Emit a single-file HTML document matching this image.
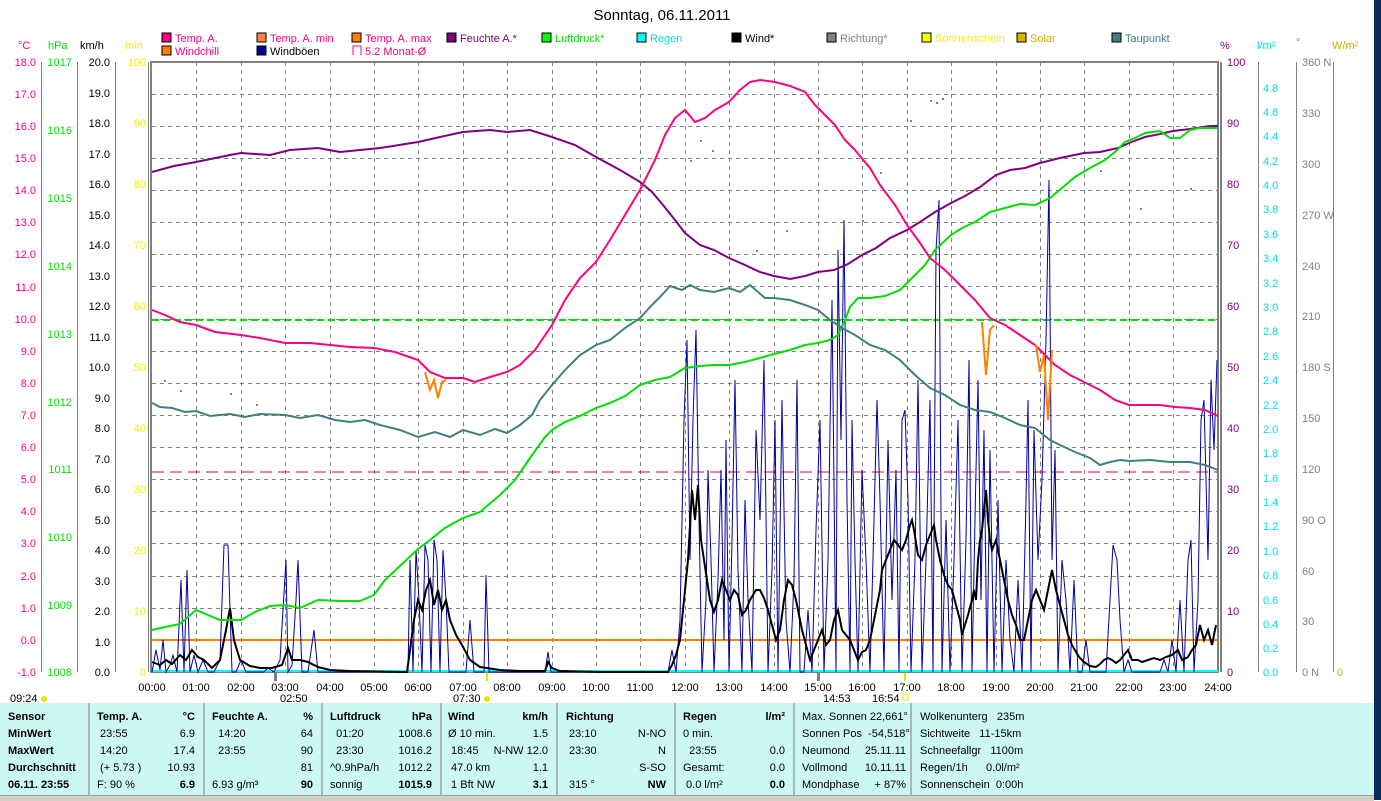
<!DOCTYPE html>
<html><head><meta charset="utf-8">
<style>
html,body{margin:0;padding:0;background:#fff;}
body{width:1381px;height:800px;overflow:hidden;position:relative;font-family:"Liberation Sans",sans-serif;}
svg{position:absolute;left:0;top:0;}
text{font-family:"Liberation Sans",sans-serif;font-size:11px;}
.tbl{position:absolute;left:0;top:703px;width:1374px;height:92px;background:#ccf8f4;}
.col{position:absolute;top:0;height:92px;border-right:2px solid #a8b8b8;font-size:11px;line-height:17px;padding-top:6px;box-sizing:border-box;}
.r{display:flex;justify-content:space-between;white-space:nowrap;}
.b{font-weight:bold;}
</style></head><body>
<svg width="1381" height="800" viewBox="0 0 1381 800">
<rect x="1374" y="0" width="7" height="800" fill="#0a2a5a"/>
<text x="662" y="20" font-size="15" text-anchor="middle" style="font-size:15px">Sonntag, 06.11.2011</text>
<g style="font-size:11px">
<rect x="162" y="33" width="9" height="9" fill="#ff0080" stroke="#000"/><text x="175" y="42" fill="#ff0080">Temp. A.</text>
<rect x="257" y="33" width="9" height="9" fill="#ff8040" stroke="#000"/><text x="270" y="42" fill="#ff0080">Temp. A. min</text>
<rect x="352" y="33" width="9" height="9" fill="#ff8000" stroke="#000"/><text x="365" y="42" fill="#ff0080">Temp. A. max</text>
<rect x="447" y="33" width="9" height="9" fill="#800080" stroke="#000"/><text x="460" y="42" fill="#800080">Feuchte A.*</text>
<rect x="542" y="33" width="9" height="9" fill="#00ff00" stroke="#000"/><text x="555" y="42" fill="#00e000">Luftdruck*</text>
<rect x="637" y="33" width="9" height="9" fill="#00ffff" stroke="#000"/><text x="650" y="42" fill="#00e0e0">Regen</text>
<rect x="732" y="33" width="9" height="9" fill="#000" stroke="#000"/><text x="745" y="42" fill="#000">Wind*</text>
<rect x="827" y="33" width="9" height="9" fill="#808080" stroke="#000"/><text x="840" y="42" fill="#808080">Richtung*</text>
<rect x="922" y="33" width="9" height="9" fill="#ffff00" stroke="#000"/><text x="935" y="42" fill="#f0f000">Sonnenschein</text>
<rect x="1017" y="33" width="9" height="9" fill="#e0b000" stroke="#000"/><text x="1030" y="42" fill="#d8a800">Solar</text>
<rect x="1112" y="33" width="9" height="9" fill="#408080" stroke="#000"/><text x="1125" y="42" fill="#408080">Taupunkt</text>
<rect x="162" y="46" width="9" height="9" fill="#ff8000" stroke="#000"/><text x="175" y="55" fill="#ff0080">Windchill</text>
<rect x="257" y="46" width="9" height="9" fill="#000090" stroke="#000"/><text x="270" y="55" fill="#000">Windböen</text>
<path d="M353 55V46h8v9" fill="none" stroke="#ff0080"/><text x="365" y="55" fill="#ff0080">5.2 Monat-Ø</text>
</g>
<text x="18" y="49" fill="#ff0080">°C</text><text x="48" y="49" fill="#00e000">hPa</text><text x="80" y="49" fill="#000">km/h</text><text x="125" y="49" fill="#f0f000">min</text>
<text x="1220" y="49" fill="#800080">%</text><text x="1257" y="49" fill="#00e0e0">l/m²</text><text x="1296" y="46" fill="#808080">°</text><text x="1332" y="49" fill="#d8a800">W/m²</text>
<g stroke="#808080" stroke-dasharray="4,4" stroke-width="1">
<path d="M196.5 62V672M241.5 62V672M285.5 62V672M330.5 62V672M374.5 62V672M418.5 62V672M463.5 62V672M507.5 62V672M552.5 62V672M596.5 62V672M640.5 62V672M685.5 62V672M729.5 62V672M774.5 62V672M818.5 62V672M862.5 62V672M907.5 62V672M951.5 62V672M996.5 62V672M1040.5 62V672M1084.5 62V672M1129.5 62V672M1173.5 62V672"/>
<path d="M152 94.5H1218M152 126.5H1218M152 158.5H1218M152 190.5H1218M152 222.5H1218M152 254.5H1218M152 286.5H1218M152 319.5H1218M152 351.5H1218M152 383.5H1218M152 415.5H1218M152 447.5H1218M152 479.5H1218M152 511.5H1218M152 543.5H1218M152 576.5H1218M152 608.5H1218M152 640.5H1218"/>
</g>
<rect x="151" y="62" width="1067" height="610" fill="none" stroke="#808080" stroke-width="2"/>
<line x1="1221" y1="62" x2="1221" y2="672" stroke="#808080" stroke-width="2"/>
<g stroke="#808080"><path d="M41.5 62V672M77.5 62V672M115.5 62V672M148.5 62V672M1258.5 62V672M1296.5 62V672M1333.5 62V672"/></g>
<g fill="#ff0080" text-anchor="end" style="font-size:11px">
<text x="36" y="66">18.0</text><text x="36" y="98">17.0</text><text x="36" y="130">16.0</text><text x="36" y="162">15.0</text><text x="36" y="194">14.0</text><text x="36" y="226">13.0</text><text x="36" y="258">12.0</text><text x="36" y="291">11.0</text><text x="36" y="323">10.0</text><text x="36" y="355">9.0</text><text x="36" y="387">8.0</text><text x="36" y="419">7.0</text><text x="36" y="451">6.0</text><text x="36" y="483">5.0</text><text x="36" y="515">4.0</text><text x="36" y="547">3.0</text><text x="36" y="580">2.0</text><text x="36" y="612">1.0</text><text x="36" y="644">0.0</text><text x="36" y="676">-1.0</text>
</g>
<g fill="#00e000" text-anchor="end"><text x="72" y="66">1017</text><text x="72" y="134">1016</text><text x="72" y="202">1015</text><text x="72" y="270">1014</text><text x="72" y="338">1013</text><text x="72" y="406">1012</text><text x="72" y="473">1011</text><text x="72" y="541">1010</text><text x="72" y="609">1009</text><text x="72" y="676">1008</text></g>
<g fill="#000" text-anchor="end"><text x="110" y="66">20.0</text><text x="110" y="97">19.0</text><text x="110" y="127">18.0</text><text x="110" y="158">17.0</text><text x="110" y="188">16.0</text><text x="110" y="219">15.0</text><text x="110" y="249">14.0</text><text x="110" y="280">13.0</text><text x="110" y="310">12.0</text><text x="110" y="341">11.0</text><text x="110" y="371">10.0</text><text x="110" y="402">9.0</text><text x="110" y="432">8.0</text><text x="110" y="463">7.0</text><text x="110" y="493">6.0</text><text x="110" y="524">5.0</text><text x="110" y="554">4.0</text><text x="110" y="585">3.0</text><text x="110" y="615">2.0</text><text x="110" y="646">1.0</text><text x="110" y="676">0.0</text></g>
<g fill="#f0f000" text-anchor="end"><text x="146" y="66">100</text><text x="146" y="127">90</text><text x="146" y="188">80</text><text x="146" y="249">70</text><text x="146" y="310">60</text><text x="146" y="371">50</text><text x="146" y="432">40</text><text x="146" y="493">30</text><text x="146" y="554">20</text><text x="146" y="615">10</text><text x="146" y="676">0</text></g>
<g fill="#800080"><text x="1227" y="66">100</text><text x="1227" y="127">90</text><text x="1227" y="188">80</text><text x="1227" y="249">70</text><text x="1227" y="310">60</text><text x="1227" y="371">50</text><text x="1227" y="432">40</text><text x="1227" y="493">30</text><text x="1227" y="554">20</text><text x="1227" y="615">10</text><text x="1227" y="676">0</text></g>
<g fill="#00e0e0" style="font-size:10px"><text x="1263" y="92">4.8</text><text x="1263" y="116">4.6</text><text x="1263" y="140">4.4</text><text x="1263" y="165">4.2</text><text x="1263" y="189">4.0</text><text x="1263" y="213">3.8</text><text x="1263" y="238">3.6</text><text x="1263" y="262">3.4</text><text x="1263" y="287">3.2</text><text x="1263" y="311">3.0</text><text x="1263" y="335">2.8</text><text x="1263" y="360">2.6</text><text x="1263" y="384">2.4</text><text x="1263" y="409">2.2</text><text x="1263" y="433">2.0</text><text x="1263" y="457">1.8</text><text x="1263" y="482">1.6</text><text x="1263" y="506">1.4</text><text x="1263" y="530">1.2</text><text x="1263" y="555">1.0</text><text x="1263" y="579">0.8</text><text x="1263" y="604">0.6</text><text x="1263" y="628">0.4</text><text x="1263" y="652">0.2</text><text x="1263" y="676">0.0</text></g>
<g fill="#808080"><text x="1302" y="66">360 N</text><text x="1302" y="117">330</text><text x="1302" y="168">300</text><text x="1302" y="219">270 W</text><text x="1302" y="270">240</text><text x="1302" y="320">210</text><text x="1302" y="371">180 S</text><text x="1302" y="422">150</text><text x="1302" y="473">120</text><text x="1302" y="524">90 O</text><text x="1302" y="575">60</text><text x="1302" y="625">30</text><text x="1302" y="676">0 N</text></g>
<text x="1337" y="676" fill="#d8a800">0</text>
<line x1="152" y1="320" x2="1218" y2="320" stroke="#00e000" stroke-width="2" stroke-dasharray="7,4"/>
<line x1="152" y1="472" x2="1218" y2="472" stroke="#e0006a" stroke-dasharray="12,6"/>
<line x1="152" y1="640" x2="1218" y2="640" stroke="#ff8000" stroke-width="2"/>
<line x1="152" y1="671" x2="1218" y2="671" stroke="#00ffff" stroke-width="2"/>
<polyline fill="none" stroke="#0000a0" stroke-width="1" points="152,672 156,650 160,670 163,640 166,672 170,665 173,655 177,672 181,580 184,672 187,570 190,672 194,655 198,672 203,660 208,672 214,672 220,660 224,545 228,545 232,672 236,672 241,660 246,672 252,672 258,672 264,672 268,668 274,672 280,660 286,560 288,672 292,665 296,600 298,560 302,672 308,672 314,630 318,672 324,672 330,672 340,672 400,672 408,672 410,560 413,672 416,550 419,600 422,672 425,545 428,560 431,672 434,540 437,560 440,672 443,550 446,600 449,672 455,672 460,672 466,672 470,620 474,672 480,672 484,672 486,575 489,672 500,672 545,672 548,652 551,672 560,672 600,672 668,672 672,650 676,672 680,620 684,420 687,340 690,560 693,420 696,330 699,520 702,672 706,600 708,470 711,560 714,672 718,580 721,470 724,640 726,440 729,672 732,540 735,380 738,570 742,672 745,500 748,600 752,672 756,430 760,520 764,360 768,672 772,570 775,420 778,672 782,400 786,620 790,672 794,580 797,380 800,672 804,672 808,610 812,672 816,530 820,420 824,672 828,560 832,300 836,672 838,250 841,440 844,220 847,500 850,672 852,420 855,560 858,672 862,470 866,560 870,672 874,520 877,400 880,500 884,672 888,440 892,600 896,470 899,672 902,420 905,410 908,500 911,672 915,560 918,380 922,672 926,560 930,400 933,672 936,250 939,200 942,672 946,520 950,672 954,560 958,420 962,672 966,540 969,360 972,672 976,470 978,380 981,600 984,430 987,672 990,450 994,672 998,500 1002,672 1006,560 1010,640 1014,672 1018,580 1022,672 1026,500 1028,400 1031,672 1034,430 1038,560 1042,480 1046,340 1049,180 1052,560 1055,450 1058,672 1062,560 1066,600 1070,672 1074,580 1078,672 1082,672 1086,640 1090,672 1096,672 1106,672 1110,600 1113,545 1117,560 1120,620 1124,672 1128,660 1132,672 1140,672 1150,672 1160,672 1164,660 1168,672 1172,640 1176,672 1180,600 1184,672 1188,560 1191,540 1194,672 1198,600 1201,420 1204,400 1208,560 1211,380 1214,450 1217,360"/>
<polyline fill="none" stroke="#000" stroke-width="2" points="152,662 160,665 166,660 172,664 180,655 186,660 192,650 198,657 204,660 212,668 220,660 226,630 230,608 234,640 240,660 250,666 260,668 272,668 282,665 288,648 292,660 300,660 308,662 318,667 330,670 350,671 400,672 407,672 410,650 414,620 418,600 422,610 426,590 430,580 434,605 438,590 442,610 446,600 450,620 456,635 462,645 470,660 480,667 500,670 520,671 545,671 548,662 552,668 560,671 600,672 668,672 672,665 676,655 680,640 684,600 688,560 692,490 695,520 698,485 701,540 704,560 707,580 710,600 714,612 718,600 722,580 726,590 730,600 734,590 738,595 742,615 746,610 750,600 756,590 760,590 764,598 768,610 772,625 776,640 780,630 784,600 788,580 792,585 796,600 802,630 806,645 810,660 814,650 818,640 822,630 826,645 830,640 834,620 838,610 842,630 846,635 850,640 854,650 858,660 862,652 866,650 870,640 876,610 880,590 882,570 886,560 890,550 894,540 898,545 902,550 906,540 910,525 912,520 914,530 918,555 922,560 926,545 930,535 934,525 936,540 940,560 944,575 948,585 952,590 956,605 960,620 962,635 964,628 968,615 972,600 974,590 976,600 978,560 980,540 982,530 984,510 986,490 988,520 990,540 992,550 996,540 1000,560 1004,580 1008,600 1012,615 1016,625 1020,640 1024,640 1028,620 1032,600 1036,590 1040,600 1044,610 1048,590 1052,570 1056,590 1060,605 1064,620 1068,635 1072,645 1076,652 1080,658 1084,662 1090,666 1096,667 1100,664 1104,660 1108,658 1112,660 1116,663 1120,660 1124,655 1128,650 1132,660 1138,660 1142,662 1148,660 1154,658 1160,660 1166,657 1172,655 1178,650 1182,660 1188,657 1192,650 1196,645 1200,625 1204,640 1208,630 1212,645 1216,625"/>
<polyline fill="none" stroke="#800080" stroke-width="2" points="152,172 174,166 196,162 230,155 241,153 270,155 290,150 318,148 340,152 360,150 380,148 418,142 440,137 463,132 490,130 507,132 530,130 552,137 575,145 596,157 620,170 640,182 652,192 663,205 675,220 685,233 700,245 714,250 729,258 745,265 760,272 774,276 790,279 805,276 818,272 834,270 848,264 862,255 876,248 890,238 907,230 920,222 935,212 951,203 965,196 980,187 996,175 1010,170 1025,168 1040,163 1060,158 1084,153 1100,152 1118,148 1129,143 1145,137 1160,134 1173,131 1190,129 1210,126 1218,126"/>
<polyline fill="none" stroke="#00e000" stroke-width="2" points="152,630 165,627 180,624 196,610 208,615 220,620 241,620 255,612 270,606 285,605 300,608 318,600 340,601 360,601 374,595 385,580 400,566 418,549 430,540 445,528 463,518 480,512 500,495 515,480 530,458 545,437 552,430 565,422 580,416 596,408 610,403 625,396 640,385 655,380 670,377 685,368 700,366 714,365 729,365 745,362 760,358 774,354 790,350 805,345 818,343 830,340 838,335 845,320 850,307 858,298 870,298 885,296 900,290 910,280 925,265 935,250 951,235 962,228 975,222 990,212 1005,208 1020,204 1035,205 1050,198 1062,188 1075,177 1090,168 1105,160 1115,152 1125,142 1135,138 1145,133 1160,131 1170,138 1180,138 1190,130 1200,128 1210,128 1218,128"/>
<polyline fill="none" stroke="#408080" stroke-width="2" points="152,403 160,407 172,408 185,412 196,411 210,416 230,414 245,417 260,414 285,415 300,418 318,415 335,420 350,422 365,420 380,425 400,430 418,437 435,432 450,437 463,430 480,435 495,429 507,433 520,425 532,415 540,400 552,385 565,370 580,355 596,345 610,340 625,328 640,318 652,305 662,295 670,286 682,290 690,285 700,290 714,292 729,288 740,292 750,285 765,298 774,298 790,300 805,305 818,310 830,320 842,328 855,335 870,345 885,350 900,360 915,375 930,388 945,395 960,405 975,410 990,412 1005,418 1020,425 1035,428 1050,440 1060,445 1075,452 1090,458 1100,465 1110,462 1120,460 1130,461 1150,460 1170,462 1190,462 1205,465 1218,470"/>
<polyline fill="none" stroke="#ff0080" stroke-width="2" points="152,310 165,315 180,322 196,325 215,332 241,335 260,338 285,343 310,343 330,345 350,347 374,348 395,352 418,360 430,372 445,378 463,378 475,382 490,377 507,372 520,365 535,350 552,325 565,300 580,278 596,262 610,240 625,215 640,190 655,160 665,135 675,118 685,110 695,122 705,118 715,110 729,102 740,90 750,82 760,80 775,82 790,86 805,92 815,105 825,115 835,125 845,140 855,150 870,168 880,185 895,205 907,225 920,243 930,258 945,270 960,285 975,300 990,318 1005,325 1020,335 1035,345 1045,355 1055,365 1070,375 1084,382 1100,390 1115,400 1129,405 1145,405 1160,405 1175,407 1190,408 1205,410 1218,416"/>
<polyline fill="none" stroke="#ff8000" stroke-width="2" points="425,372 430,390 434,380 438,398 442,382 446,380"/>
<polyline fill="none" stroke="#ff8000" stroke-width="2" points="982,322 986,375 990,330 994,325"/>
<polyline fill="none" stroke="#ff8000" stroke-width="2" points="1036,345 1040,372 1044,355 1048,420 1052,350"/>
<g fill="#808080">
<rect x="700" y="140" width="2" height="2"/><rect x="712" y="150" width="2" height="2"/><rect x="690" y="160" width="2" height="2"/><rect x="756" y="250" width="2" height="2"/><rect x="786" y="230" width="2" height="2"/><rect x="930" y="100" width="2" height="2"/><rect x="936" y="102" width="2" height="2"/><rect x="942" y="98" width="2" height="2"/><rect x="910" y="120" width="2" height="2"/><rect x="880" y="172" width="2" height="2"/><rect x="966" y="190" width="2" height="2"/><rect x="1140" y="208" width="2" height="2"/><rect x="1190" y="188" width="2" height="2"/><rect x="180" y="390" width="2" height="2"/><rect x="230" y="393" width="2" height="2"/><rect x="256" y="404" width="2" height="2"/><rect x="164" y="380" width="2" height="2"/><rect x="862" y="220" width="2" height="2"/><rect x="1040" y="160" width="2" height="2"/><rect x="1100" y="170" width="2" height="2"/>
</g>
<g fill="#000" text-anchor="middle" style="font-size:11px">
<text x="152" y="691">00:00</text><text x="196" y="691">01:00</text><text x="241" y="691">02:00</text><text x="285" y="691">03:00</text><text x="330" y="691">04:00</text><text x="374" y="691">05:00</text><text x="418" y="691">06:00</text><text x="463" y="691">07:00</text><text x="507" y="691">08:00</text><text x="552" y="691">09:00</text><text x="596" y="691">10:00</text><text x="640" y="691">11:00</text><text x="685" y="691">12:00</text><text x="729" y="691">13:00</text><text x="774" y="691">14:00</text><text x="818" y="691">15:00</text><text x="862" y="691">16:00</text><text x="907" y="691">17:00</text><text x="951" y="691">18:00</text><text x="996" y="691">19:00</text><text x="1040" y="691">20:00</text><text x="1084" y="691">21:00</text><text x="1129" y="691">22:00</text><text x="1173" y="691">23:00</text><text x="1218" y="691">24:00</text>
</g>
<g fill="#000" style="font-size:11px"><text x="10" y="702">09:24</text><text x="280" y="702">02:50</text><text x="453" y="702">07:30</text><text x="823" y="702">14:53</text><text x="872" y="702">16:54</text></g>
<circle cx="44" cy="699" r="3" fill="#f0e000"/><circle cx="487" cy="699" r="3" fill="#f0e000"/><rect x="903" y="694" width="5" height="6" fill="none" stroke="#f0e000"/>
<rect x="274" y="673" width="3" height="8" fill="#808080"/><rect x="486" y="673" width="2" height="8" fill="#f0e000"/><rect x="817" y="673" width="3" height="8" fill="#808080"/><rect x="904" y="673" width="2" height="8" fill="#f0e000"/>
</svg>
<div class="tbl">
<div class="col" style="left:0;width:88px;padding-left:8px;border:none"><div class="b">Sensor</div><div class="b">MinWert</div><div class="b">MaxWert</div><div class="b">Durchschnitt</div><div class="b">06.11. 23:55</div></div>
<div class="col" style="left:88px;width:117px;padding:6px 8px 0 7px;border-left:2px solid #a8b8b8"><div class="r b"><span>Temp. A.</span><span>°C</span></div><div class="r"><span>&nbsp;23:55</span><span>6.9</span></div><div class="r"><span>&nbsp;14:20</span><span>17.4</span></div><div class="r"><span>&nbsp;(+ 5.73 )</span><span>10.93</span></div><div class="r"><span>F: 90 %</span><span class="b">6.9</span></div></div>
<div class="col" style="left:205px;width:118px;padding:6px 8px 0 7px"><div class="r b"><span>Feuchte A.</span><span>%</span></div><div class="r"><span>&nbsp;&nbsp;14:20</span><span>64</span></div><div class="r"><span>&nbsp;&nbsp;23:55</span><span>90</span></div><div class="r"><span></span><span>81</span></div><div class="r"><span>6.93 g/m³</span><span class="b">90</span></div></div>
<div class="col" style="left:323px;width:119px;padding:6px 8px 0 7px"><div class="r b"><span>Luftdruck</span><span>hPa</span></div><div class="r"><span>&nbsp;&nbsp;01:20</span><span>1008.6</span></div><div class="r"><span>&nbsp;&nbsp;23:30</span><span>1016.2</span></div><div class="r"><span>^0.9hPa/h</span><span>1012.2</span></div><div class="r"><span>sonnig</span><span class="b">1015.9</span></div></div>
<div class="col" style="left:442px;width:116px;padding:6px 8px 0 6px"><div class="r b"><span>Wind</span><span>km/h</span></div><div class="r"><span>Ø 10 min.</span><span>1.5</span></div><div class="r"><span>&nbsp;18:45</span><span>N-NW 12.0</span></div><div class="r"><span>&nbsp;47.0 km</span><span>1.1</span></div><div class="r"><span>&nbsp;1 Bft NW</span><span class="b">3.1</span></div></div>
<div class="col" style="left:558px;width:118px;padding:6px 8px 0 8px"><div class="r b"><span>Richtung</span><span></span></div><div class="r"><span>&nbsp;23:10</span><span>N-NO</span></div><div class="r"><span>&nbsp;23:30</span><span>N</span></div><div class="r"><span></span><span>S-SO</span></div><div class="r"><span>&nbsp;315 °</span><span class="b">NW</span></div></div>
<div class="col" style="left:676px;width:119px;padding:6px 8px 0 7px"><div class="r b"><span>Regen</span><span>l/m²</span></div><div class="r"><span>0 min.</span><span></span></div><div class="r"><span>&nbsp;&nbsp;23:55</span><span>0.0</span></div><div class="r"><span>Gesamt:</span><span>0.0</span></div><div class="r"><span>&nbsp;0.0 l/m²</span><span class="b">0.0</span></div></div>
<div class="col" style="left:795px;width:117px;padding:6px 4px 0 7px"><div class="r"><span>Max. Sonnen 22,661°</span></div><div class="r"><span>Sonnen Pos&nbsp;&nbsp;-54,518°</span></div><div class="r"><span>Neumond</span><span>25.11.11</span></div><div class="r"><span>Vollmond</span><span>10.11.11</span></div><div class="r"><span>Mondphase</span><span>+ 87%</span></div></div>
<div class="col" style="left:912px;width:130px;padding:6px 4px 0 8px;border:none"><div>Wolkenunterg&nbsp;&nbsp;&nbsp;235m</div><div>Sichtweite&nbsp;&nbsp;&nbsp;11-15km</div><div>Schneefallgr&nbsp;&nbsp;&nbsp;1100m</div><div>Regen/1h&nbsp;&nbsp;&nbsp;&nbsp;&nbsp;&nbsp;0.0l/m²</div><div>Sonnenschein&nbsp;&nbsp;0:00h</div></div>
</div>
<div style="position:absolute;left:0;top:795px;width:1374px;height:5px;background:#d4d0c8;border-top:1px solid #a0a0a0"></div>
</body></html>
